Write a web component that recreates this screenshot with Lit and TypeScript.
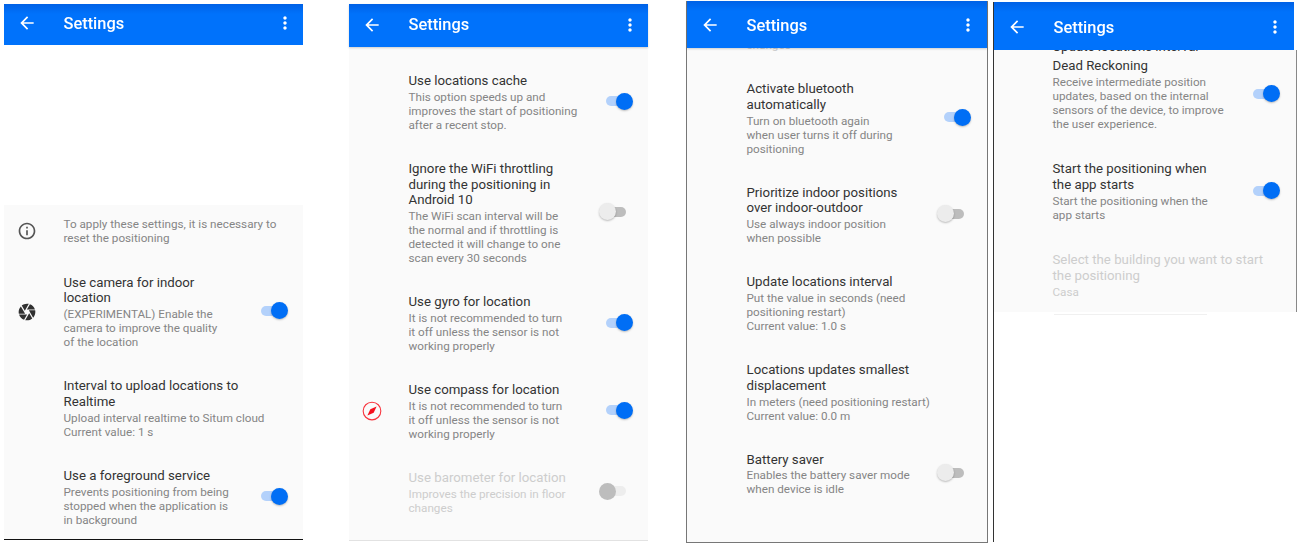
import { LitElement, html, css, svg } from "lit";
import { customElement } from "lit/decorators.js";

type Row = {
  icon?: "info" | "camera" | "compass";
  title?: string[];
  summary?: string[];
  sw?: "on" | "off" | "dis";
  disabled?: boolean;
  cls?: string;
};

const lock = ["It is not recommended to turn", "it off unless the sensor is not", "working properly"];

const panels: { cls: string; rows: Row[] }[] = [
  {
    cls: "p1",
    rows: [
      { icon: "info", cls: "note", summary: ["To apply these settings, it is necessary to", "reset the positioning"] },
      { icon: "camera", title: ["Use camera for indoor", "location"], summary: ["(EXPERIMENTAL) Enable the", "camera to improve the quality", "of the location"], sw: "on" },
      { title: ["Interval to upload locations to", "Realtime"], summary: ["Upload interval realtime to Situm cloud", "Current value: 1 s"] },
      { title: ["Use a foreground service"], summary: ["Prevents positioning from being", "stopped when the application is", "in background"], sw: "on" },
    ],
  },
  {
    cls: "p2",
    rows: [
      { title: ["Use locations cache"], summary: ["This option speeds up and", "improves the start of positioning", "after a recent stop."], sw: "on" },
      { title: ["Ignore the WiFi throttling", "during the positioning in", "Android 10"], summary: ["The WiFi scan interval will be", "the normal and if throttling is", "detected it will change to one", "scan every 30 seconds"], sw: "off" },
      { title: ["Use gyro for location"], summary: lock, sw: "on" },
      { icon: "compass", title: ["Use compass for location"], summary: lock, sw: "on" },
      { title: ["Use barometer for location"], summary: ["Improves the precision in floor", "changes"], sw: "dis", disabled: true },
    ],
  },
  {
    cls: "p3",
    rows: [
      { summary: ["changes"], disabled: true, cls: "clip3" },
      { title: ["Activate bluetooth", "automatically"], summary: ["Turn on bluetooth again", "when user turns it off during", "positioning"], sw: "on" },
      { title: ["Prioritize indoor positions", "over indoor-outdoor"], summary: ["Use always indoor position", "when possible"], sw: "off" },
      { title: ["Update locations interval"], summary: ["Put the value in seconds (need", "positioning restart)", "Current value: 1.0 s"] },
      { title: ["Locations updates smallest", "displacement"], summary: ["In meters (need positioning restart)", "Current value: 0.0 m"] },
      { title: ["Battery saver"], summary: ["Enables the battery saver mode", "when device is idle"], sw: "off" },
    ],
  },
  {
    cls: "p4",
    rows: [
      { title: ["Update locations interval"], cls: "clip4" },
      { title: ["Dead Reckoning"], summary: ["Receive intermediate position", "updates, based on the internal", "sensors of the device, to improve", "the user experience."], sw: "on", cls: "dead" },
      { title: ["Start the positioning when", "the app starts"], summary: ["Start the positioning when the", "app starts"], sw: "on" },
      { title: ["Select the building you want to start", "the positioning"], summary: ["Casa"], disabled: true },
    ],
  },
];

const icons = {
  back: svg`<path d="M20 11H7.83l5.59-5.59L12 4l-8 8 8 8 1.41-1.41L7.83 13H20v-2z"/>`,
  more: svg`<path d="M12 8c1.1 0 2-.9 2-2s-.9-2-2-2-2 .9-2 2 .9 2 2 2zm0 2c-1.1 0-2 .9-2 2s.9 2 2 2 2-.9 2-2-.9-2-2-2zm0 6c-1.1 0-2 .9-2 2s.9 2 2 2 2-.9 2-2-.9-2-2-2z"/>`,
  info: svg`<path d="M11 7h2v2h-2zm0 4h2v6h-2zm1-9C6.48 2 2 6.48 2 12s4.48 10 10 10 10-4.48 10-10S17.52 2 12 2zm0 18c-4.41 0-8-3.59-8-8s3.59-8 8-8 8 3.59 8 8-3.59 8-8 8z"/>`,
  camera: svg`<path d="M9.4 10.5l4.77-8.26C13.47 2.09 12.75 2 12 2c-2.4 0-4.6.85-6.32 2.25l3.66 6.35.06-.1zM21.54 9c-.92-2.92-3.15-5.26-6-6.34L11.88 9h9.66zm.26 1h-7.49l.29.5 4.76 8.25C21 16.97 22 14.61 22 12c0-.69-.07-1.35-.2-2zM8.54 12l-3.9-6.75C3.01 7.03 2 9.39 2 12c0 .69.07 1.35.2 2h7.49l-1.15-2zm-6.08 3c.92 2.92 3.15 5.26 6 6.34L12.12 15H2.46zm11.27 0l-3.9 6.76c.7.15 1.42.24 2.17.24 2.4 0 4.6-.85 6.32-2.25l-3.66-6.35-.93 1.6z"/>`,
  compass: svg`<circle cx="12" cy="12" r="10.6" fill="none" stroke="#f8323c" stroke-width="1.3"/><path d="M17.5 6.5l-7.5 3.5-3.5 7.5 7.5-3.5z" fill="#f5101e"/>`,
};

@customElement("app-root")
export class AppRoot extends LitElement {
  static styles = css`
    :host {
      display: block;
      width: 1303px;
      height: 555px;
      overflow: hidden;
      background: #fff;
      font-family: Roboto, "Liberation Sans", sans-serif;
    }
    .page {
      display: flex;
      align-items: flex-start;
      padding-left: 4px;
      filter: blur(0.3px);
    }
    .panel {
      display: flex;
      flex-direction: column;
      box-sizing: border-box;
      flex: none;
      background: #fafafa;
    }
    .p1 { width: 299px; height: 536px; margin-top: 4px; border-bottom: 1px solid #111; }
    .p2 { width: 299.5px; height: 537px; margin-top: 4px; margin-left: 45.5px; border-bottom: 1px solid #e2e2e2; }
    .p3 { width: 302px; height: 542px; margin-top: 1px; margin-left: 38px; border: solid #777; border-width: 0 1.5px 1.5px; }
    .p4 { width: 304px; height: 540px; margin-top: 2px; margin-left: 5px; background: #fff; border-left: 1.5px solid #333; }
    header {
      display: flex;
      align-items: center;
      box-sizing: border-box;
      flex: none;
      position: relative;
      z-index: 1;
      color: #fff;
      background: linear-gradient(#0061e6, #0072fb 10px);
    }
    .p1 header { height: 41px; padding-bottom: 3px; }
    .p2 header { height: 43px; padding-bottom: 2px; box-shadow: 0 1px 2px rgba(0, 0, 0, 0.18); }
    .p3 header { height: 47px; padding-top: 1px; box-shadow: 0 1px 2px rgba(0, 0, 0, 0.18); }
    .p4 header { height: 48px; padding-top: 2px; margin-right: 3px; }
    header .back { width: 20px; height: 20px; margin-left: 13px; fill: #fff; flex: none; }
    header h1 {
      flex: 1;
      margin: 0 0 0 26.5px;
      font-size: 16.4px;
      font-weight: 500;
      color: #fff;
    }
    .p2 header h1 { margin-left: 27px; }
    header .more { width: 20px; height: 20px; margin-right: 8px; fill: #fff; flex: none; }
    .p3 header .more, .p4 header .more { margin-right: 9px; }
    .spacer { height: 159.6px; background: #fff; flex: none; }
    .body { flex: 1; min-height: 0; overflow: hidden; background: #fafafa; }
    .p2 .body { padding-top: 12px; }
    .p4 .body { flex: none; height: 262px; border-right: 1.5px solid #888; }
    .row {
      display: flex;
      align-items: center;
      padding: 14px 15px 15px 0;
    }
    .p3 .row, .p4 .row { padding-right: 16px; }
    .p4 .row { padding-bottom: 16px; }
    .row.note { padding-top: 12px; padding-bottom: 16px; }
    .row.clip3 { margin-top: -24px; }
    .row.clip4 { margin-top: -11px; padding-top: 0; padding-bottom: 3px; }
    .row.dead { padding-top: 0; }
    .icon { width: 46px; margin-right: 13.5px; flex: none; display: flex; justify-content: center; }
    .p2 .icon { margin-right: 14px; }
    .p4 .icon { margin-right: 12.5px; }
    .icon svg { width: 20px; height: 20px; }
    .i-info { fill: #555; }
    .i-camera { fill: #303030; }
    .text { flex: 1; min-width: 0; }
    .t {
      font-size: 13.25px;
      line-height: 15.8px;
      color: #333;
      white-space: nowrap;
    }
    .p4 .t { line-height: 16px; }
    .s {
      font-size: 11.7px;
      line-height: 14px;
      color: #858585;
      white-space: nowrap;
    }
    .t + .s { margin-top: 1px; }
    .off .t, .off .s { color: #cdcdcd; }
    .sw { position: relative; width: 34px; height: 17px; flex: none; margin-top: -2px; }
    .track {
      position: absolute;
      left: 7px;
      top: 3.5px;
      width: 20px;
      height: 10px;
      border-radius: 5px;
    }
    .thumb {
      position: absolute;
      top: 0;
      width: 17px;
      height: 17px;
      border-radius: 50%;
      box-shadow: 0 1px 2px rgba(0, 0, 0, 0.25);
    }
    .sw.on .track { background: #b3d1fb; }
    .sw.on .thumb { right: 0; background: #006ef5; }
    .sw.off .track { background: #bdbdbd; }
    .sw.off .thumb { left: 0; background: #ececec; }
    .sw.dis .track { background: #ededed; }
    .sw.dis .thumb { left: 0; background: #bdbdbd; box-shadow: none; }
    .tail {
      height: 1px;
      margin: 2px 90px 0 60px;
      background: #f0f0f0;
    }
  `;

  private ico(name: keyof typeof icons, cls = "") {
    return html`<svg class=${cls} viewBox="0 0 24 24">${icons[name]}</svg>`;
  }

  private row(r: Row) {
    return html`<div class="row ${r.cls ?? ""} ${r.disabled ? "off" : ""}">
      <div class="icon">${r.icon ? this.ico(r.icon, `i-${r.icon}`) : ""}</div>
      <div class="text">
        ${(r.title ?? []).map((l) => html`<div class="t">${l}</div>`)}
        ${(r.summary ?? []).map((l) => html`<div class="s">${l}</div>`)}
      </div>
      ${r.sw ? html`<div class="sw ${r.sw}"><div class="track"></div><div class="thumb"></div></div>` : ""}
    </div>`;
  }

  render() {
    return html`<div class="page">
      ${panels.map(
        (p) => html`<section class="panel ${p.cls}">
          <header>
            ${this.ico("back", "back")}
            <h1>Settings</h1>
            ${this.ico("more", "more")}
          </header>
          ${p.cls === "p1" ? html`<div class="spacer"></div>` : ""}
          <div class="body">${p.rows.map((r) => this.row(r))}</div>
          ${p.cls === "p4" ? html`<div class="tail"></div>` : ""}
        </section>`
      )}
    </div>`;
  }
}
